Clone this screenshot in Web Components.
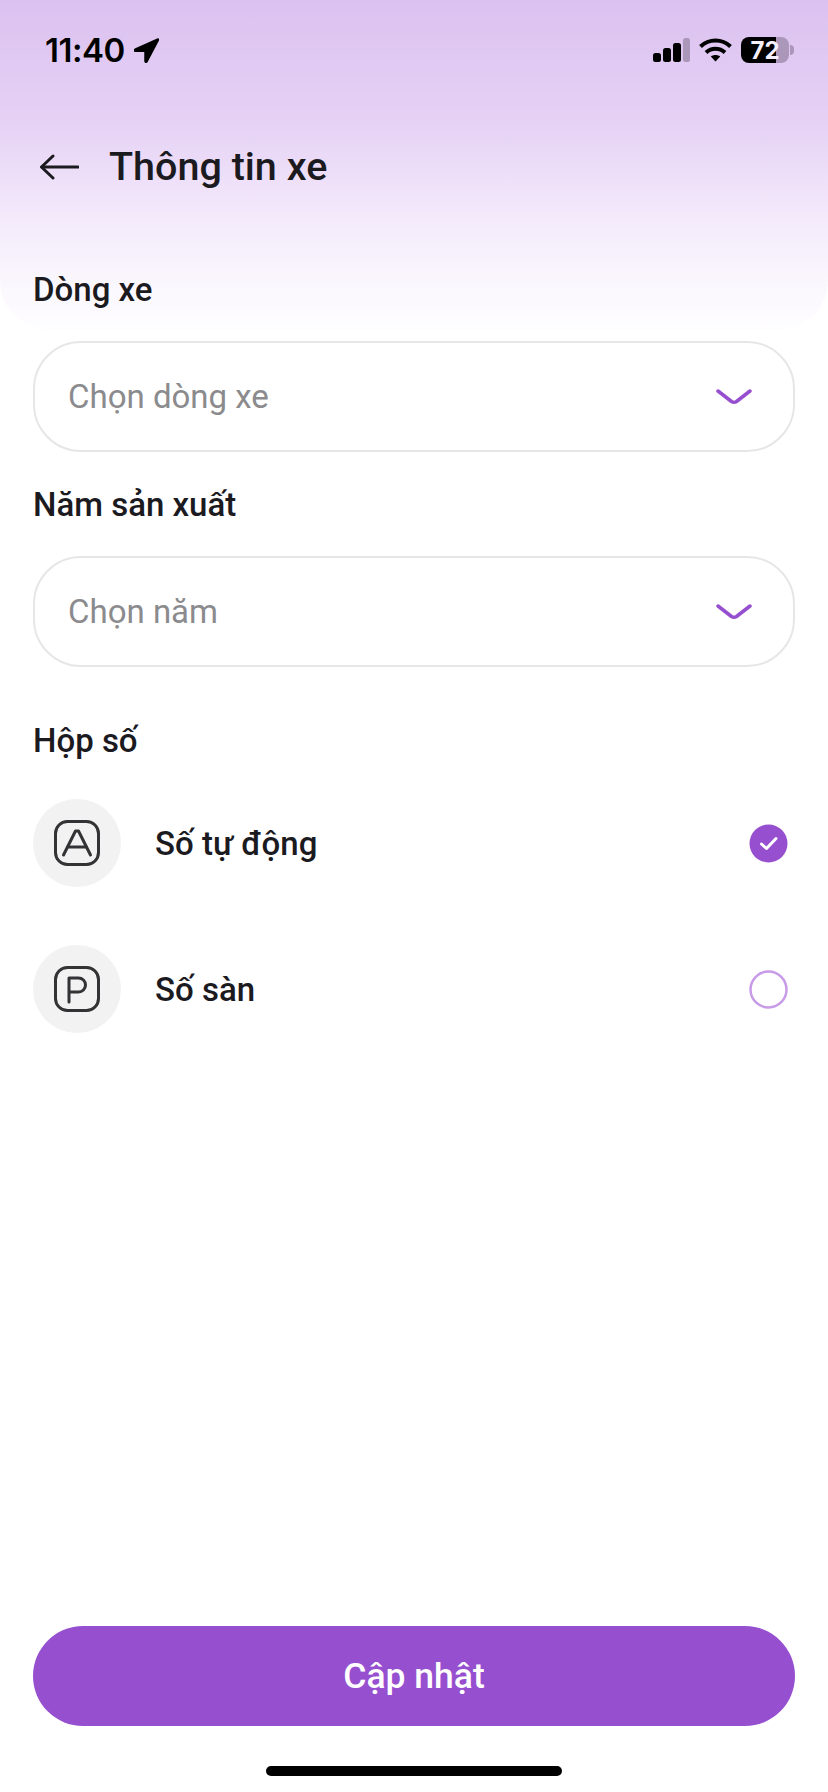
<!DOCTYPE html>
<html lang="vi">
<head>
<meta charset="utf-8">
<title>Thông tin xe</title>
<style>
    html, body {
        margin: 0;
        background: #fff;
    }

    body {
        font-family: Roboto, 'Noto Sans', sans-serif;
        color: #1b1a1f;
    }
</style>
</head>
<body>
<app-page>
    <nav-header slot="header" title="Thông tin xe"></nav-header>
    <select-field>
        <span slot="label">Dòng xe</span>
        Chọn dòng xe
    </select-field>
    <select-field>
        <span slot="label">Năm sản xuất</span>
        Chọn năm
    </select-field>
    <gear-group>
        <span slot="label">Hộp số</span>
        <gear-option letter="A" checked>Số tự động</gear-option>
        <gear-option letter="P">Số sàn</gear-option>
    </gear-group>
    <primary-button slot="footer">Cập nhật</primary-button>
    <home-indicator slot="footer"></home-indicator>
</app-page>

<script>
const pageTemplate = document.createElement("template")
pageTemplate.innerHTML = `
<style>
    :host {
        display: flex;
        flex-direction: column;
        width: 828px;
        height: 1792px;
        overflow: hidden;
    }

    main {
        display: flex;
        flex-direction: column;
        padding: 0 33px;
    }

    footer {
        margin-top: auto;
        display: flex;
        flex-direction: column;
        align-items: center;
    }
</style>
<slot name="header"></slot>
<main><slot></slot></main>
<footer><slot name="footer"></slot></footer>
`

class AppPage extends HTMLElement {
    constructor() {
        super()
        this.attachShadow({mode: 'open'})
        this.shadowRoot.appendChild(pageTemplate.content.cloneNode(true))
    }
}

const headerTemplate = document.createElement("template")
headerTemplate.innerHTML = `
<style>
    :host {
        display: block;
        height: 330px;
        margin-bottom: -70px;
        box-sizing: border-box;
        border-radius: 0 0 50px 50px;
        background: linear-gradient(180deg, #dbc1f0 0%, #e6d2f5 38%, #f3e9fb 65%, #fbf8fe 88%, #fefdff 100%);
    }

    .status {
        display: flex;
        align-items: center;
        height: 100px;
        padding: 0 34px 0 45px;
        color: #000;
    }

    .time {
        font-family: Inter, sans-serif;
        font-size: 33px;
        font-weight: 600;
        letter-spacing: -0.5px;
        line-height: 100px;
    }

    .loc {
        margin-left: 9px;
    }

    .right {
        margin-left: auto;
        display: flex;
        align-items: center;
        gap: 9px;
    }

    .battery {
        position: relative;
        display: flex;
        align-items: center;
        justify-content: center;
        width: 48px;
        height: 26px;
        border-radius: 8px;
        overflow: hidden;
        background: linear-gradient(90deg, #000 0, #000 35px, #ab97ba 35px);
        color: #f6effc;
        font-family: Inter, sans-serif;
        font-size: 24px;
        font-weight: 700;
    }

    .cap {
        width: 4px;
        height: 10px;
        margin-left: -8px;
        border-radius: 0 4px 4px 0;
        background: #ab97ba;
    }

    .bar {
        display: flex;
        align-items: center;
        gap: 30px;
        padding: 34px 0 0 40px;
        height: 66px;
    }

    h1 {
        margin: 0;
        font-size: 39.500px;
        font-weight: 500;
        line-height: 66px;
    }
</style>
<div class="status">
    <span class="time">11:40</span>
    <svg class="loc" width="25" height="25" viewBox="0 0 25 25"><path d="M24 1 1 11.300c-1 .5-.7 2 .4 2H11v10c0 1.100 1.500 1.400 2 .4L24.500 1.800c.2-.5-.2-1-.5-.8Z" fill="#000" stroke="#000" stroke-width="1.500" stroke-linejoin="round"/></svg>
    <div class="right">
        <svg width="37" height="24" viewBox="0 0 37 24">
            <rect x="0" y="15" width="8" height="9" rx="2.500" fill="#000"/>
            <rect x="10" y="10" width="8" height="14" rx="2.500" fill="#000"/>
            <rect x="20" y="5" width="8" height="19" rx="2.500" fill="#000"/>
            <rect x="30" y="0" width="7" height="24" rx="2.500" fill="#ab97ba"/>
        </svg>
        <svg width="33" height="24" viewBox="0 0 33 24" fill="none" stroke="#000" stroke-width="4">
            <path d="M1.500 8.500C10 .500 23 .500 31.500 8.500"/>
            <path d="M7 14.500c5.500-5 13.500-5 19 0"/>
            <path d="M16.500 23.500 11.800 18.500c2.700-2 6.700-2 9.400 0Z" fill="#000" stroke="none"/>
        </svg>
        <div class="battery">72</div>
        <div class="cap"></div>
    </div>
</div>
<div class="bar">
    <svg width="39" height="26" viewBox="0 0 39 26" fill="none" stroke="#1b1a1f" stroke-width="3" stroke-linecap="round" stroke-linejoin="round">
        <path d="M38 13H2"/>
        <path d="M13 2 1.500 13 13 24"/>
    </svg>
    <h1 id="title"></h1>
</div>
`

class NavHeader extends HTMLElement {
    constructor() {
        super()
        this.attachShadow({mode: 'open'})
        this.shadowRoot.appendChild(headerTemplate.content.cloneNode(true))
        this._title = this.shadowRoot.querySelector("#title")
    }

    connectedCallback() {
        this._title.textContent = this.getAttribute("title")
    }
}

const fieldTemplate = document.createElement("template")
fieldTemplate.innerHTML = `
<style>
    :host {
        display: block;
        padding-top: 10px;
        margin-bottom: 23px;
    }

    .label {
        font-size: 33px;
        font-weight: 500;
        line-height: 40px;
        margin-bottom: 31px;
    }

    .box {
        display: flex;
        align-items: center;
        justify-content: space-between;
        height: 111px;
        box-sizing: border-box;
        padding: 0 41px 0 33px;
        border: 2px solid #e6e6e8;
        border-radius: 48px;
        background: #fff;
        color: #8b8b8e;
        font-size: 33px;
        line-height: 40px;
    }
</style>
<div class="label"><slot name="label"></slot></div>
<div class="box">
    <span><slot></slot></span>
    <svg width="36" height="16" viewBox="0 0 36 16" fill="none" stroke="#964fcf" stroke-width="3.500" stroke-linecap="round" stroke-linejoin="round">
        <path d="M2 2 15.500 12.500c1.500 1 3.500 1 5 0L34 2"/>
    </svg>
</div>
`

class SelectField extends HTMLElement {
    constructor() {
        super()
        this.attachShadow({mode: 'open'})
        this.shadowRoot.appendChild(fieldTemplate.content.cloneNode(true))
    }
}

const groupTemplate = document.createElement("template")
groupTemplate.innerHTML = `
<style>
    :host {
        display: flex;
        flex-direction: column;
        gap: 58px;
        padding-top: 31px;
    }

    .label {
        font-size: 33px;
        font-weight: 500;
        line-height: 40px;
        margin-bottom: -20px;
    }
</style>
<div class="label"><slot name="label"></slot></div>
<slot></slot>
`

class GearGroup extends HTMLElement {
    constructor() {
        super()
        this.attachShadow({mode: 'open'})
        this.shadowRoot.appendChild(groupTemplate.content.cloneNode(true))
    }
}

const optionTemplate = document.createElement("template")
optionTemplate.innerHTML = `
<style>
    :host {
        display: flex;
        align-items: center;
        height: 88px;
        font-size: 33px;
        font-weight: 500;
    }

    .badge {
        display: flex;
        align-items: center;
        justify-content: center;
        width: 88px;
        height: 88px;
        border-radius: 50%;
        background: #f2f2f2;
        margin-right: 34px;
    }

    .text {
        flex: 1;
    }

    .radio {
        margin-right: 7px;
    }
</style>
<div class="badge"><svg id="icon" width="46" height="46" viewBox="0 0 46 46" fill="none" stroke="#333336" stroke-width="3" stroke-linecap="round" stroke-linejoin="round"></svg></div>
<span class="text"><slot></slot></span>
<svg class="radio" id="radio" width="39" height="39" viewBox="0 0 39 39"></svg>
`

const gearPaths = {
    A: '<path d="M9.500 35 21.500 11h3L36.500 35"/><path d="M13.500 27H32.500"/>',
    P: '<path d="M15 36V12h9.500a7 7 0 0 1 0 14H15"/>'
}

class GearOption extends HTMLElement {
    constructor() {
        super()
        this.attachShadow({mode: 'open'})
        this.shadowRoot.appendChild(optionTemplate.content.cloneNode(true))
    }

    connectedCallback() {
        let letter = this.getAttribute("letter")
        this.shadowRoot.querySelector("#icon").innerHTML =
            '<rect x="1.500" y="1.500" width="43" height="43" rx="12"/>' + gearPaths[letter]

        let radio = this.shadowRoot.querySelector("#radio")
        if (this.hasAttribute("checked")) {
            radio.innerHTML = '<circle cx="19.500" cy="19.500" r="19" fill="#964fcf"/>' +
                '<path d="M12.500 20 17.500 24.500 27 14.500" fill="none" stroke="#fff" stroke-width="3" stroke-linecap="round" stroke-linejoin="round"/>'
        } else {
            radio.innerHTML = '<circle cx="19.500" cy="19.500" r="18" fill="none" stroke="#c89be8" stroke-width="2.500"/>'
        }
    }
}

const buttonTemplate = document.createElement("template")
buttonTemplate.innerHTML = `
<style>
    :host {
        display: flex;
        align-items: center;
        justify-content: center;
        width: 762px;
        height: 100px;
        border-radius: 50px;
        background: #964fcf;
        color: #fff;
        font-size: 35.500px;
        font-weight: 500;
    }
</style>
<slot></slot>
`

class PrimaryButton extends HTMLElement {
    constructor() {
        super()
        this.attachShadow({mode: 'open'})
        this.shadowRoot.appendChild(buttonTemplate.content.cloneNode(true))
    }
}

const homeTemplate = document.createElement("template")
homeTemplate.innerHTML = `
<style>
    :host {
        display: block;
        width: 296px;
        height: 10px;
        margin: 40px 0 16px;
        border-radius: 5px;
        background: #000;
    }
</style>
`

class HomeIndicator extends HTMLElement {
    constructor() {
        super()
        this.attachShadow({mode: 'open'})
        this.shadowRoot.appendChild(homeTemplate.content.cloneNode(true))
    }
}

window.customElements.define("app-page", AppPage)
window.customElements.define("nav-header", NavHeader)
window.customElements.define("select-field", SelectField)
window.customElements.define("gear-group", GearGroup)
window.customElements.define("gear-option", GearOption)
window.customElements.define("primary-button", PrimaryButton)
window.customElements.define("home-indicator", HomeIndicator)
</script>
</body>
</html>
